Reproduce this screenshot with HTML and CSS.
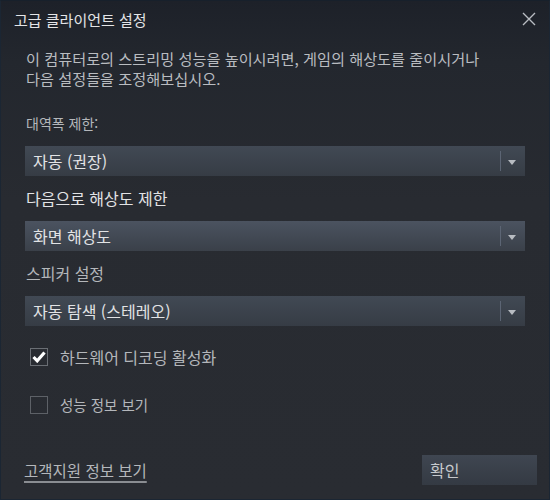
FILE: index.html
```html
<!DOCTYPE html>
<html lang="ko">
<head>
<meta charset="utf-8">
<link rel="stylesheet" href="styles.css">
</head>
<body>
<div class="dialog">
  <div class="titlebar">
    <div class="title">고급 클라이언트 설정</div>
    <div class="close">
      <svg width="14" height="14" viewBox="0 0 14 14"><path d="M1 1 L13 13 M13 1 L1 13" stroke="#b8bcc2" stroke-width="1.4" fill="none"/></svg>
    </div>
  </div>
  <div class="content">
    <p class="desc">이 컴퓨터로의 스트리밍 성능을 높이시려면, 게임의 해상도를 줄이시거나<br>다음 설정들을 조정해보십시오.</p>
    <div class="label first">대역폭 제한:</div>
    <div class="select">
      <span class="value">자동 (권장)</span>
      <span class="sep"></span>
      <span class="arrow"></span>
    </div>
    <div class="label bright">다음으로 해상도 제한</div>
    <div class="select hover">
      <span class="value">화면 해상도</span>
      <span class="sep"></span>
      <span class="arrow"></span>
    </div>
    <div class="label big">스피커 설정</div>
    <div class="select">
      <span class="value">자동 탐색 (스테레오)</span>
      <span class="sep"></span>
      <span class="arrow"></span>
    </div>
    <div class="check first-check">
      <span class="box checked">
        <svg width="14" height="12" viewBox="0 0 14 12"><path d="M1.5 6 L5.2 9.8 L12.5 1.5" stroke="#ffffff" stroke-width="3.2" fill="none"/></svg>
      </span>
      <span class="check-label">하드웨어 디코딩 활성화</span>
    </div>
    <div class="check second-check">
      <span class="box"></span>
      <span class="check-label small">성능 정보 보기</span>
    </div>
  </div>
  <div class="footer">
    <a class="link">고객지원 정보 보기</a>
    <button class="ok">확인</button>
  </div>
</div>
</body>
</html>
```
FILE: styles.css
```css
html, body {
  margin: 0;
  padding: 0;
  width: 550px;
  height: 500px;
  overflow: hidden;
  background: #23262d;
}
.dialog {
  box-sizing: border-box;
  width: 550px;
  height: 500px;
  border: 1px solid #1b2633;
  border-top-color: #17202b;
  background: linear-gradient(180deg, #1d2129 0px, #23272e 60px, #282b31 200px, #292c32 500px);
  font-family: "Noto Sans CJK KR", "Noto Sans", sans-serif;
  display: flex;
  flex-direction: column;
}
.titlebar {
  display: flex;
  justify-content: space-between;
  align-items: center;
  height: 38px;
  padding: 0 10px 0 13px;
}
.title {
  color: #e4e5e7;
  font-size: 15px;
  line-height: 20px;
}
.close {
  width: 20px;
  height: 20px;
  display: flex;
  align-items: center;
  justify-content: center;
  margin-top: -2px;
}
.content {
  padding: 0 24px 0 24px;
  display: flex;
  flex-direction: column;
}
.desc {
  margin: 9px 0 0 1px;
  color: #b9bcc0;
  font-size: 15.2px;
  line-height: 20px;
}
.label {
  color: #b4b7bb;
  font-size: 14px;
  line-height: 20px;
  margin: 12px 0 13px 1px;
}
.label.first {
  margin-top: 25px;
}
.label.bright {
  color: #e2e3e5;
  font-size: 16px;
}
.label.big {
  font-size: 16px;
}
.select {
  height: 30px;
  display: flex;
  align-items: center;
  background: linear-gradient(180deg, #414954 0%, #363c45 100%);
}
.select.hover {
  background: linear-gradient(180deg, #4b5360 0%, #3a4049 100%);
}
.value {
  flex: 1;
  color: #e2e3e5;
  font-size: 16px;
  padding-left: 8px;
  line-height: 30px;
}
.sep {
  width: 1px;
  height: 20px;
  background: #5c6574;
  margin-right: 7px;
}
.arrow {
  width: 0;
  height: 0;
  border-left: 4.5px solid transparent;
  border-right: 4.5px solid transparent;
  border-top: 5px solid #b8bcc2;
  margin-right: 9px;
  margin-top: 2px;
}
.check {
  display: flex;
  align-items: center;
  height: 18px;
}
.first-check {
  margin-top: 22px;
}
.second-check {
  margin-top: 30px;
}
.box {
  box-sizing: border-box;
  width: 18px;
  height: 18px;
  border: 1px solid #5d6167;
  margin-left: 5px;
  display: flex;
  align-items: center;
  justify-content: center;
}
.box.checked {
  border-color: #6a6e74;
}
.check-label {
  color: #b4b7bb;
  font-size: 16px;
  margin-left: 12px;
  line-height: 20px;
}
.check-label.small {
  font-size: 14.5px;
}
.footer {
  margin-top: auto;
  display: flex;
  justify-content: space-between;
  align-items: center;
  padding: 0 12px 14px 23px;
}
.link {
  color: #b4b7bb;
  font-size: 15.5px;
  line-height: 20px;
  text-decoration: underline;
  text-decoration-color: #8a8d92;
  text-decoration-thickness: 2px;
  text-underline-offset: 4px;
}
.ok {
  width: 115px;
  height: 30px;
  border: none;
  padding: 0 0 0 8px;
  text-align: left;
  color: #c6c9cd;
  font-family: "Noto Sans CJK KR", "Noto Sans", sans-serif;
  font-size: 16px;
  background: linear-gradient(180deg, #3f4651 0%, #343a43 100%);
}
```
